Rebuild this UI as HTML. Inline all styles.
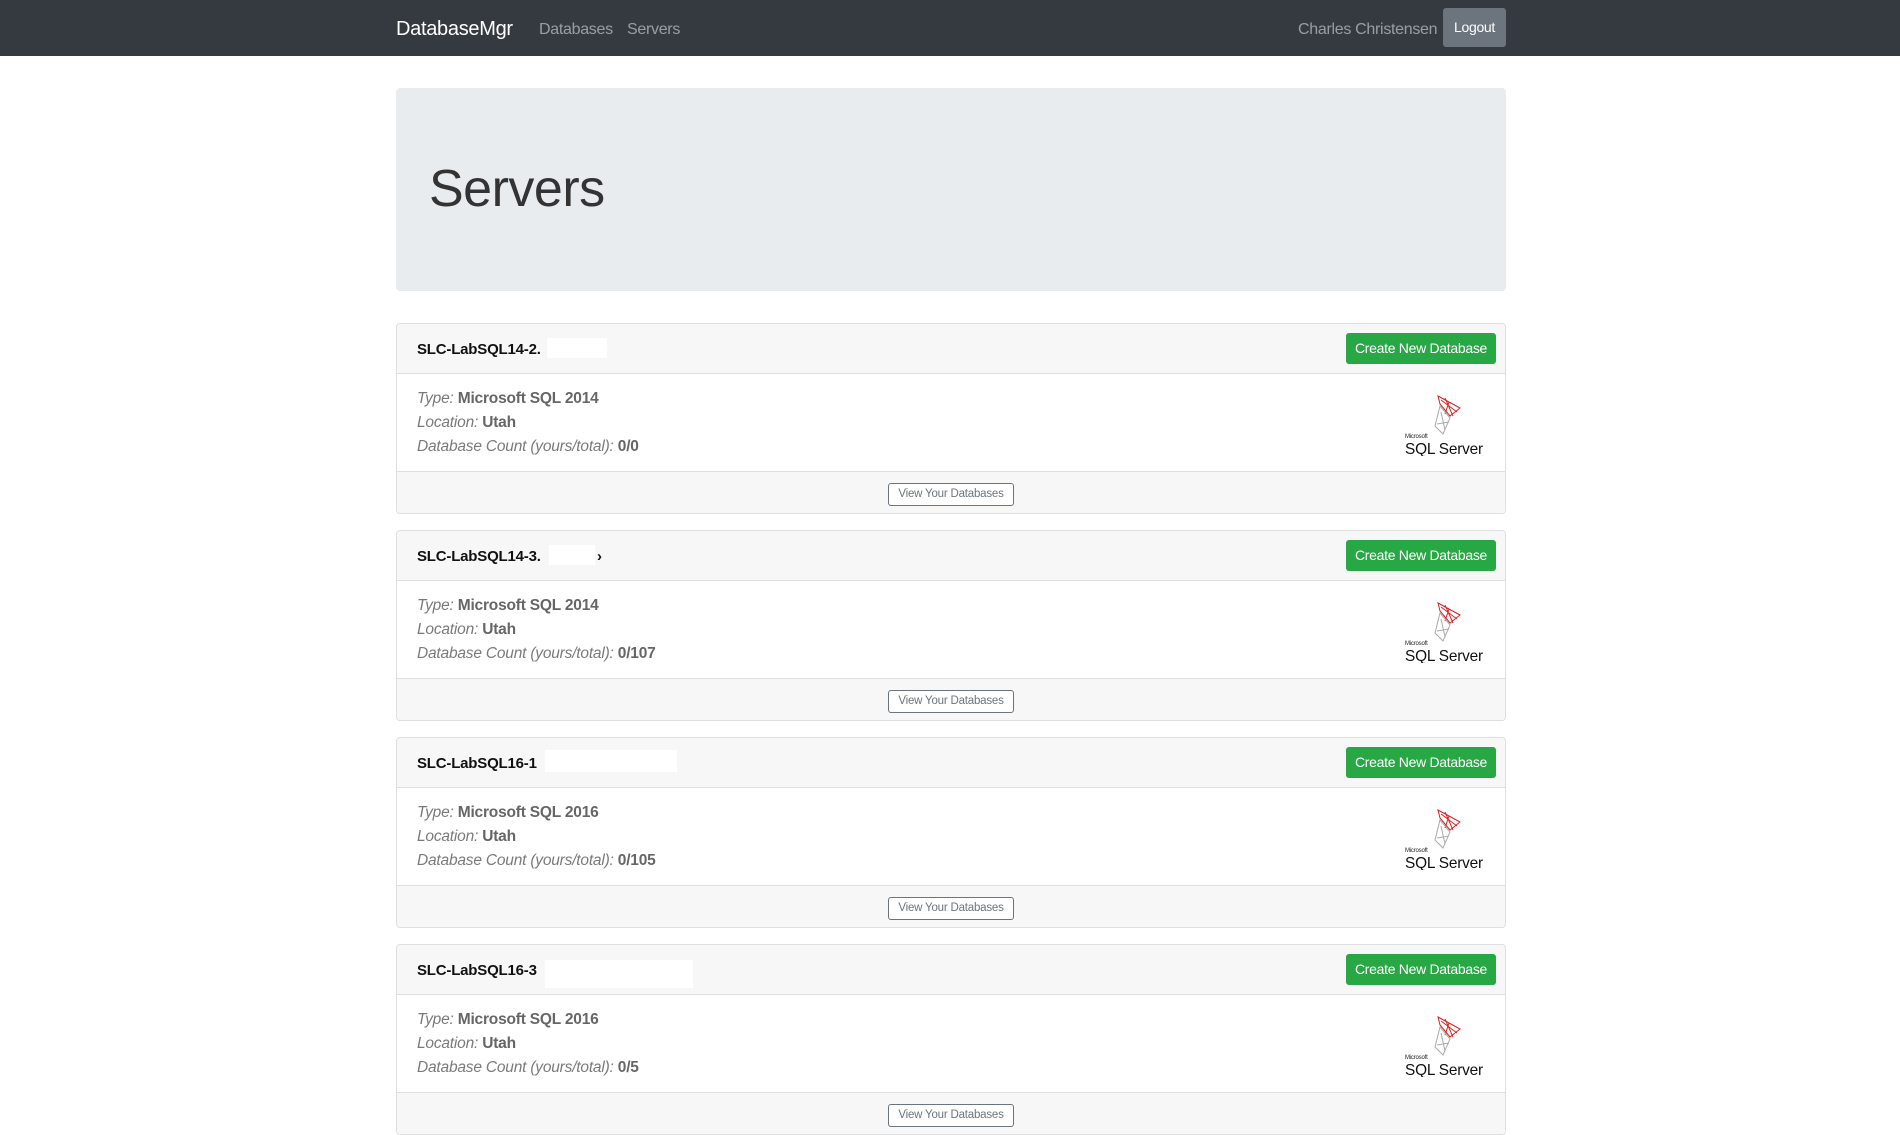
<!DOCTYPE html>
<html><head><meta charset="utf-8"><style>
*{box-sizing:border-box;margin:0;padding:0}
body{width:1900px;height:1080px;overflow:hidden;background:#fff;font-family:"Liberation Sans",sans-serif;color:#212529}
.nav{height:56px;background:#343a40;position:relative}
.brand{position:absolute;left:396px;top:18px;font-size:20px;color:#fff;letter-spacing:-0.3px}
.nl{position:absolute;top:21px;font-size:16px;color:rgba(255,255,255,.5);letter-spacing:-0.3px}
.logout{position:absolute;left:1443px;top:8px;width:63px;height:39px;background:#6c757d;border-radius:3px;color:#fff;font-size:14px;text-align:center;line-height:39px;letter-spacing:-0.3px}
.jumbo{position:absolute;left:396px;top:88px;width:1110px;height:203px;background:#e9ecef;border-radius:4px}
.jumbo h1{position:absolute;left:33px;top:70px;font-size:52px;font-weight:300;line-height:1.2;color:#333;letter-spacing:-0.5px}
.card{position:absolute;left:396px;width:1110px;height:191px;border:1px solid #dfdfdf;border-radius:4px;overflow:hidden}
.hd{height:50px;background:#f7f7f7;border-bottom:1px solid #dfdfdf;position:relative}
.hd b{position:absolute;left:20px;top:17px;font-size:15px;color:#111;letter-spacing:-0.2px}
.red{position:absolute;background:#fff}
.cb{position:absolute;right:9px;top:9px;width:150px;height:31px;background:#28a745;border-radius:3px;color:#fff;font-size:14px;text-align:center;line-height:31px;letter-spacing:-0.3px}
.bd{height:97px;padding:13px 20px;position:relative;font-size:15.5px;line-height:24px;color:#6c757d;letter-spacing:-0.2px}
.bd i{color:#7a7a7a}
.bd b{color:#666}
.ft{height:44px;background:#f7f7f7;border-top:1px solid #dfdfdf;position:relative}
.vb{position:absolute;left:491px;top:11px;width:126px;height:23px;border:1px solid #6c757d;border-radius:3px;font-size:11.5px;color:#6c757d;text-align:center;line-height:21px;background:#fff;letter-spacing:-0.2px}
.logo{position:absolute;left:1008px;top:20px}
</style></head><body>
<div class="nav">
<div class="brand">DatabaseMgr</div>
<div class="nl" style="left:539px">Databases</div>
<div class="nl" style="left:627px">Servers</div>
<div class="nl" style="left:1298px">Charles Christensen</div>
<div class="logout">Logout</div>
</div>
<div class="jumbo"><h1>Servers</h1></div>

<div class="card" style="top:323px"><div class="hd"><b>SLC-LabSQL14-2.</b><div class="red" style="left:150px;top:14px;width:60px;height:20px"></div><div class="cb">Create New Database</div></div>
<div class="bd"><i>Type:</i> <b>Microsoft SQL 2014</b><br><i>Location:</i> <b>Utah</b><br><i>Database Count (yours/total):</i> <b>0/0</b>
<svg class="logo" width="82" height="62" viewBox="0 0 82 62"><g fill="none" stroke-width="1"><path d="M33 2 L55 14 L45 22 L35 10 Z M36 6 L52 18 M40 4 L48 22 M44 8 L40 20" stroke="#d22"/><path d="M35 12 L45 24 L38 40 L30 32 Z M32 30 L44 28 M36 18 L40 36" stroke="#aaa"/></g><text x="0" y="44" font-size="6" font-family="Liberation Sans" fill="#222">Microsoft</text><text x="0" y="60" font-size="16" font-family="Liberation Sans" fill="#111" textLength="78" lengthAdjust="spacingAndGlyphs">SQL Server</text></svg></div>
<div class="ft"><div class="vb">View Your Databases</div></div></div>

<div class="card" style="top:530px"><div class="hd"><b>SLC-LabSQL14-3.</b><div class="red" style="left:152px;top:14px;width:46px;height:20px"></div><b style="left:200px">&rsaquo;</b><div class="cb">Create New Database</div></div>
<div class="bd"><i>Type:</i> <b>Microsoft SQL 2014</b><br><i>Location:</i> <b>Utah</b><br><i>Database Count (yours/total):</i> <b>0/107</b>
<svg class="logo" width="82" height="62" viewBox="0 0 82 62"><g fill="none" stroke-width="1"><path d="M33 2 L55 14 L45 22 L35 10 Z M36 6 L52 18 M40 4 L48 22 M44 8 L40 20" stroke="#d22"/><path d="M35 12 L45 24 L38 40 L30 32 Z M32 30 L44 28 M36 18 L40 36" stroke="#aaa"/></g><text x="0" y="44" font-size="6" font-family="Liberation Sans" fill="#222">Microsoft</text><text x="0" y="60" font-size="16" font-family="Liberation Sans" fill="#111" textLength="78" lengthAdjust="spacingAndGlyphs">SQL Server</text></svg></div>
<div class="ft"><div class="vb">View Your Databases</div></div></div>

<div class="card" style="top:737px"><div class="hd"><b>SLC-LabSQL16-1</b><div class="red" style="left:148px;top:12px;width:132px;height:22px"></div><div class="cb">Create New Database</div></div>
<div class="bd"><i>Type:</i> <b>Microsoft SQL 2016</b><br><i>Location:</i> <b>Utah</b><br><i>Database Count (yours/total):</i> <b>0/105</b>
<svg class="logo" width="82" height="62" viewBox="0 0 82 62"><g fill="none" stroke-width="1"><path d="M33 2 L55 14 L45 22 L35 10 Z M36 6 L52 18 M40 4 L48 22 M44 8 L40 20" stroke="#d22"/><path d="M35 12 L45 24 L38 40 L30 32 Z M32 30 L44 28 M36 18 L40 36" stroke="#aaa"/></g><text x="0" y="44" font-size="6" font-family="Liberation Sans" fill="#222">Microsoft</text><text x="0" y="60" font-size="16" font-family="Liberation Sans" fill="#111" textLength="78" lengthAdjust="spacingAndGlyphs">SQL Server</text></svg></div>
<div class="ft"><div class="vb">View Your Databases</div></div></div>

<div class="card" style="top:944px"><div class="hd"><b>SLC-LabSQL16-3</b><div class="red" style="left:148px;top:15px;width:148px;height:28px"></div><div class="cb">Create New Database</div></div>
<div class="bd"><i>Type:</i> <b>Microsoft SQL 2016</b><br><i>Location:</i> <b>Utah</b><br><i>Database Count (yours/total):</i> <b>0/5</b>
<svg class="logo" width="82" height="62" viewBox="0 0 82 62"><g fill="none" stroke-width="1"><path d="M33 2 L55 14 L45 22 L35 10 Z M36 6 L52 18 M40 4 L48 22 M44 8 L40 20" stroke="#d22"/><path d="M35 12 L45 24 L38 40 L30 32 Z M32 30 L44 28 M36 18 L40 36" stroke="#aaa"/></g><text x="0" y="44" font-size="6" font-family="Liberation Sans" fill="#222">Microsoft</text><text x="0" y="60" font-size="16" font-family="Liberation Sans" fill="#111" textLength="78" lengthAdjust="spacingAndGlyphs">SQL Server</text></svg></div>
<div class="ft"><div class="vb">View Your Databases</div></div></div>
</body></html>
